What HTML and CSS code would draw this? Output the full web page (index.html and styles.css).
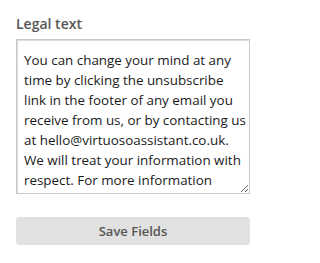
FILE: index.html
```html
<!DOCTYPE html>
<html>
<head>
<meta charset="utf-8">
<link rel="stylesheet" href="styles.css">
</head>
<body>
<div class="panel">
  <label class="label" for="legal">Legal text</label>
  <textarea id="legal" class="field">You can change your mind at any time by clicking the unsubscribe link in the footer of any email you receive from us, or by contacting us at hello@virtuosoassistant.co.uk. We will treat your information with respect. For more information about our privacy practices please visit our website.</textarea>
  <button class="save">Save Fields</button>
</div>
</body>
</html>
```

FILE: styles.css
```css
html, body {
  margin: 0;
  padding: 0;
  background: #fff;
}
.panel {
  display: flex;
  flex-direction: column;
  padding: 14px 18px 0 16px;
  font-family: "Open Sans", sans-serif;
}
.label {
  font-size: 14px;
  font-weight: 600;
  color: #555;
  line-height: 20px;
  margin-bottom: 5px;
}
.field {
  box-sizing: border-box;
  width: 234px;
  height: 155px;
  font-family: "Open Sans", sans-serif;
  font-size: 13.4px;
  line-height: 20px;
  color: #1a1a1a;
  border: 1px solid #c8c8c8;
  box-shadow: inset 1px 1px 0 #ddd;
  padding: 10px 2px 10px 7px;
  margin: 0;
  resize: vertical;
  overflow: hidden;
}
.save {
  margin-top: 23px;
  width: 234px;
  height: 28px;
  border: none;
  border-radius: 3px;
  background: #e1e1e1;
  color: #555;
  font-family: "Open Sans", sans-serif;
  font-size: 13px;
  font-weight: 600;
}
```
